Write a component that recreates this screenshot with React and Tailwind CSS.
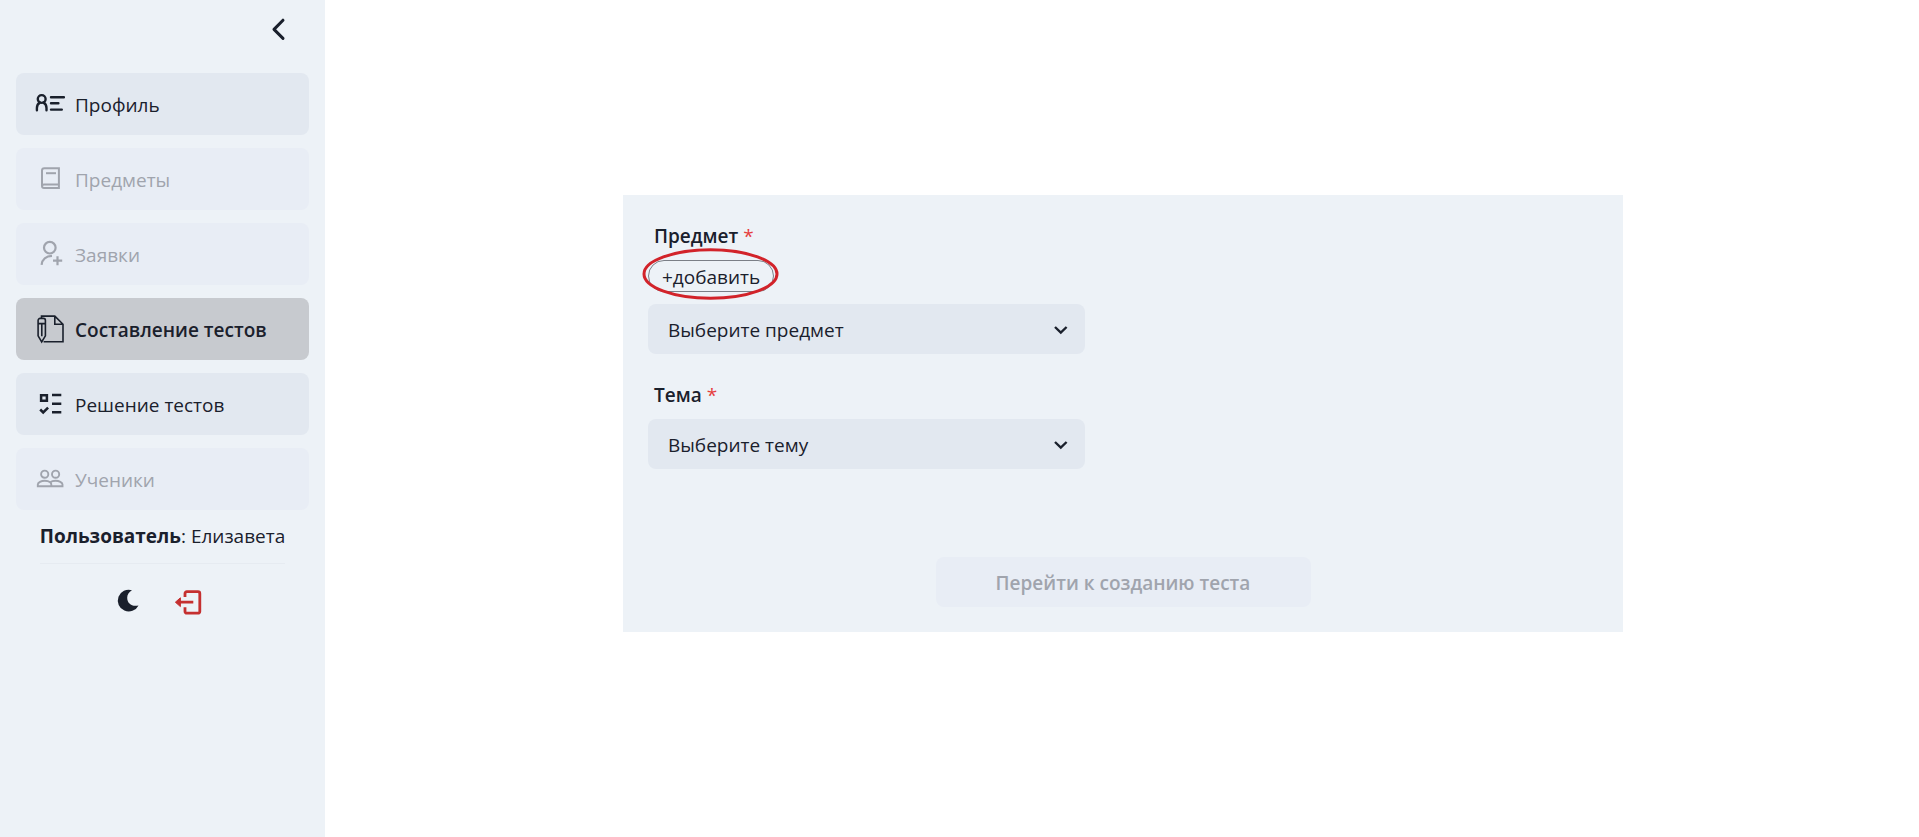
import React from "react";

function Icon({ children, strokeWidth = 2 }) {
  return (
    <svg
      className="size-[30px] shrink-0"
      viewBox="0 0 30 30"
      fill="none"
      stroke="currentColor"
      strokeWidth={strokeWidth}
      aria-hidden="true"
    >
      {children}
    </svg>
  );
}

const ProfileIcon = () => (
  <Icon strokeWidth={2.4}>
    <circle cx="6.7" cy="10" r="3.9" />
    <path
      d="M1.900 21.300v-2.200c0-2.600 1.400-4.700 3-5.500M11.500 21.300v-2.200c0-2.600-1.400-4.700-3-5.500M16 8.300h13M16 14.300h7.400M16 20.600h10.800"
      strokeLinecap="round"
    />
  </Icon>
);

const BookIcon = () => (
  <Icon strokeWidth={2}>
    <path d="M23.900 20.500V4.200H9.400a2.400 2.400 0 0 0-2.400 2.400V22a2 2 0 0 0 2 2h14.900v-3.600M7 22a2 2 0 0 1 2-1.600h14.900" />
    <path d="M11 9.200h10" />
  </Icon>
);

const UserPlusIcon = () => (
  <Icon strokeWidth={2.2}>
    <circle cx="14.800" cy="8.700" r="5.800" />
    <path d="M6.600 25.800c.5-5.300 4.600-8.800 10.400-9M22.500 17.200v9M18 21.700h9.200" />
  </Icon>
);

const ComposeIcon = () => (
  <Icon strokeWidth={1.6}>
    <path d="M6.500 4.200V2.100h13.300l8.200 8.200v17.400H8.600M19.800 2.100v8.200H28" />
    <path d="M3.100 6.400a2 2 0 0 1 2-2h3.300a2 2 0 0 1 2 2v15.400l-3.700 6.200-3.600-6.200zM3.100 9.600h7.300M6.800 9.600v12.600" />
  </Icon>
);

const ChecklistIcon = () => (
  <Icon strokeWidth={2.5}>
    <path d="M6.100 6.200h5.800v5.500H6.100zM17 6.100h9.300M17 14.800h9.300M17 23.200h9.300" />
    <path d="M5.200 20.500l3 3 4.900-4.900" />
  </Icon>
);

const PeopleIcon = () => (
  <Icon strokeWidth={1.9}>
    <circle cx="9.700" cy="10.200" r="3.600" />
    <circle cx="20.600" cy="10.200" r="3.600" />
    <path d="M16.300 22.200H2.800v-1.600c0-2.200 3.500-3.900 6.900-3.900 2.200 0 4.200.6 5.500 1.600 1.200-1 3.200-1.600 5.400-1.600 3.400 0 6.900 1.700 6.900 3.900v1.600H16.300v-1.600c0-.9-.4-1.700-1.100-2.300" />
  </Icon>
);

const navItems = [
  { label: "Профиль", icon: ProfileIcon },
  { label: "Предметы", icon: BookIcon, disabled: true },
  { label: "Заявки", icon: UserPlusIcon, disabled: true },
  { label: "Составление тестов", icon: ComposeIcon, active: true },
  { label: "Решение тестов", icon: ChecklistIcon },
  { label: "Ученики", icon: PeopleIcon, disabled: true },
];

function NavButton({ label, icon: Glyph, active, disabled }) {
  const tone = active
    ? "bg-[#c7cacf] font-semibold"
    : disabled
      ? "bg-[#e8edf5] text-[#a0a4ad]"
      : "bg-[#e2e8f0]";
  return (
    <button
      type="button"
      disabled={disabled}
      aria-current={active ? "page" : undefined}
      className={`flex h-[62px] w-full items-center gap-[10px] rounded-lg px-[19px] text-left ${tone}`}
    >
      <Glyph />
      <span className="pt-[2px]">{label}</span>
    </button>
  );
}

function Sidebar() {
  return (
    <aside className="flex w-[325px] shrink-0 flex-col bg-[#edf2f7] px-4">
      <div className="flex h-[73px] justify-end pt-[14px] pr-4">
        <button type="button" aria-label="Свернуть меню" className="size-[30px]">
          <svg viewBox="0 0 30 30" fill="none" stroke="currentColor" strokeWidth="3" strokeLinecap="round" strokeLinejoin="round">
            <path d="M20 6.200L11 15.400l9 9" />
          </svg>
        </button>
      </div>
      <nav className="flex flex-col gap-[13px]">
        {navItems.map((item) => (
          <NavButton key={item.label} {...item} />
        ))}
      </nav>
      <p className="mt-[11px] text-center">
        <span className="font-bold">Пользователь</span>: Елизавета
      </p>
      <hr className="mx-6 mt-3 border-[#e6ebf1]" />
      <div className="mt-[22px] flex justify-center gap-[30px] pr-[10px]">
        <button type="button" aria-label="Тёмная тема" className="size-[30px]">
          <svg viewBox="0 0 30 30" fill="currentColor">
            <path d="M19 4.200a10.900 10.900 0 1 0 6.500 15.200c-6.500 1.600-11.300-1.900-11.300-7.700 0-3 1.700-6 4.800-7.500z" />
          </svg>
        </button>
        <button type="button" aria-label="Выйти" className="size-[30px] text-[#c53030]">
          <svg viewBox="0 0 30 30" fill="none" stroke="currentColor" strokeWidth="2.800" strokeLinejoin="round">
            <path d="M12 11V7.400a1.800 1.800 0 0 1 1.800-1.800H25a1.800 1.800 0 0 1 1.800 1.800v18a1.800 1.800 0 0 1-1.800 1.800H13.800a1.800 1.800 0 0 1-1.800-1.800V21.300M6 16.200h14.300" />
            <path d="M2.400 16.200l5-4.400v8.800z" fill="currentColor" strokeWidth="1" />
          </svg>
        </button>
      </div>
    </aside>
  );
}

function SelectBox({ id, placeholder }) {
  return (
    <div className="relative w-[437px] max-w-full">
      <select id={id} className="h-[50px] w-full appearance-none rounded-lg bg-[#e2e8f0] pt-[2px] pr-12 pl-5">
        <option>{placeholder}</option>
      </select>
      <svg
        className="pointer-events-none absolute top-[14px] right-3 size-6"
        viewBox="0 0 24 24"
        fill="none"
        stroke="currentColor"
        strokeWidth="2.400"
        aria-hidden="true"
      >
        <path d="M6 9l5.800 5.600L17.600 9" />
      </svg>
    </div>
  );
}

function FieldLabel({ htmlFor, children }) {
  return (
    <label htmlFor={htmlFor} className="ml-[6px] leading-[30px] font-semibold">
      {children} <span className="font-normal text-[#e53e3e]">*</span>
    </label>
  );
}

export default function App() {
  return (
    <div className="flex min-h-screen bg-white font-['Open_Sans','Noto_Sans',sans-serif] text-[19px] leading-[30px] text-[#1a202c]">
      <Sidebar />
      <main className="flex flex-1 justify-center pt-[195px] pr-6 pb-12 pl-[26px]">
        <form className="flex w-full max-w-[1000px] flex-col items-start self-start bg-[#edf2f7] px-[25px] pt-[26px] pb-[25px]">
          <FieldLabel htmlFor="subject">Предмет</FieldLabel>
          <div className="relative mt-[9px] mb-3">
            <button type="button" className="h-8 rounded-full border border-[#7b7f87] px-[13px] pt-[2px] leading-[28px]">
              +добавить
            </button>
            <svg
              className="pointer-events-none absolute -inset-x-[6px] -top-3 h-[52px] w-[137px] text-[#d2232a]"
              viewBox="0 0 137 52"
              fill="none"
              stroke="currentColor"
              strokeWidth="3"
              aria-hidden="true"
            >
              <ellipse cx="68.500" cy="26" rx="66.500" ry="24.200" />
            </svg>
          </div>
          <SelectBox id="subject" placeholder="Выберите предмет" />
          <div className="mt-[26px] mb-[9px] flex">
            <FieldLabel htmlFor="topic">Тема</FieldLabel>
          </div>
          <SelectBox id="topic" placeholder="Выберите тему" />
          <button
            type="submit"
            disabled
            className="mt-[88px] h-[50px] w-[375px] self-center rounded-lg bg-[#e8edf5] pt-[2px] font-semibold text-[#a0a4ad]"
          >
            Перейти к созданию теста
          </button>
        </form>
      </main>
    </div>
  );
}
